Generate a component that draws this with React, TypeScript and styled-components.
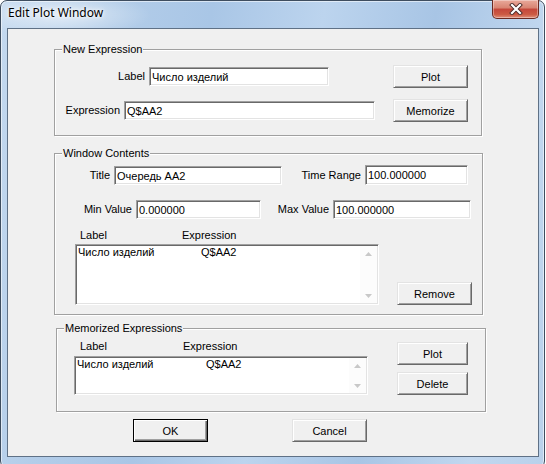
import React from 'react';
import styled, { createGlobalStyle } from 'styled-components';

const GlobalStyle = createGlobalStyle`
  html, body {
    margin: 0;
    padding: 0;
    height: 464px;
    overflow: hidden;
    background: #ffffff;
  }
  body {
    font-family: "Liberation Sans", Arial, sans-serif;
    font-size: 11px;
    color: #000;
  }
`;

const Frame = styled.div`
  width: 545px;
  height: 468px;
  box-sizing: border-box;
  display: flex;
  flex-direction: column;
  border: 1px solid #3e4d5f;
  border-radius: 7px 7px 7px 7px;
  background:
    radial-gradient(ellipse 90px 22px at 60px 14px, rgba(255, 255, 255, 0.55), rgba(255, 255, 255, 0) 100%),
    linear-gradient(100deg, #c4d9ef 0%, #b3cde9 18%, #a9c6e6 34%, #bcd4ee 52%, #a8c5e5 70%, #c1d7ef 88%, #b9d1eb 100%);
  box-shadow: inset 0 0 0 1px rgba(255, 255, 255, 0.55);
`;

const TitleBar = styled.div`
  height: 27px;
  display: flex;
  align-items: center;
  padding-left: 7px;
`;

const TitleText = styled.span`
  font-family: "Segoe UI", "Noto Sans", "Liberation Sans", sans-serif;
  font-size: 12px;
  color: #000;
  margin-top: -4px;
  text-shadow: 0 0 6px #fff, 0 0 3px #fff;
`;

const CloseButton = styled.div`
  margin-left: auto;
  margin-right: 5px;
  align-self: flex-start;
  margin-top: -1px;
  width: 47px;
  height: 19px;
  box-sizing: border-box;
  border: 1px solid #6b2a22;
  border-top: none;
  border-radius: 0 0 5px 5px;
  background: linear-gradient(180deg, #e9a99b 0%, #d88371 45%, #c4463a 50%, #cc5a43 80%, #e0907a 100%);
  box-shadow: inset 0 0 0 1px rgba(255, 255, 255, 0.35);
  display: flex;
  align-items: center;
  justify-content: center;
`;

const Client = styled.div`
  flex: 1;
  margin: 0 5px 10px 6px;
  border: 1px solid #5f7186;
  background: #f0f0f0;
  display: flex;
  flex-direction: column;
`;

const Group = styled.div<{ $left: number; $width: number; $top: number }>`
  position: relative;
  box-sizing: border-box;
  margin-left: ${(p) => p.$left}px;
  margin-top: ${(p) => p.$top}px;
  width: ${(p) => p.$width}px;
  border: 1px solid #a0a0a0;
  box-shadow: inset 1px 1px 0 #fff, 1px 1px 0 #fff;
`;

const GroupCaption = styled.span`
  position: absolute;
  top: -7px;
  left: 7px;
  padding: 0 1px;
  line-height: 13px;
  background: #f0f0f0;
`;

const GroupBody = styled.div<{ $pad: string }>`
  padding: ${(p) => p.$pad};
  display: flex;
  flex-direction: column;
`;

const Row = styled.div<{ $gap?: number; $height?: number }>`
  display: flex;
  align-items: center;
  margin-top: ${(p) => p.$gap ?? 0}px;
  height: ${(p) => p.$height ?? 23}px;
`;

const Caption = styled.span<{ $width: number }>`
  width: ${(p) => p.$width}px;
  margin-right: 4px;
  text-align: right;
  white-space: nowrap;
  line-height: 13px;
`;

const TextBox = styled.div<{ $width: number; $height?: number }>`
  box-sizing: border-box;
  width: ${(p) => p.$width}px;
  height: ${(p) => p.$height ?? 19}px;
  background: #fff;
  border-style: solid;
  border-width: 1px;
  border-color: #a0a0a0 #fff #fff #a0a0a0;
  box-shadow: inset 1px 1px 0 #696969, inset -1px -1px 0 #e3e3e3;
  padding: 2px 0 0 2px;
  line-height: 14px;
  white-space: nowrap;
  overflow: hidden;
`;

const Button = styled.div<{ $width?: number; $default?: boolean; $left?: number }>`
  box-sizing: border-box;
  width: ${(p) => p.$width ?? 75}px;
  height: 23px;
  margin-left: ${(p) => (p.$left === undefined ? 'auto' : `${p.$left}px`)};
  background: #f0f0f0;
  display: flex;
  align-items: center;
  justify-content: center;
  border: 1px solid;
  border-color: ${(p) => (p.$default ? '#000' : '#e3e3e3 #696969 #696969 #e3e3e3')};
  box-shadow: ${(p) =>
    p.$default
      ? 'inset 1px 1px 0 #fff, inset -1px -1px 0 #696969, inset -2px -2px 0 #a0a0a0'
      : 'inset 1px 1px 0 #fff, inset -1px -1px 0 #a0a0a0'};
  flex-shrink: 0;
`;

const ListHeader = styled.div<{ $indent: number; $col: number; $gap?: number }>`
  display: flex;
  padding-left: ${(p) => p.$indent}px;
  margin-top: ${(p) => p.$gap ?? 0}px;
  line-height: 13px;
  & > span:first-child {
    width: ${(p) => p.$col}px;
  }
`;

const ListBox = styled.div<{ $width: number; $height: number; $gap?: number }>`
  box-sizing: border-box;
  width: ${(p) => p.$width}px;
  height: ${(p) => p.$height}px;
  margin-top: ${(p) => p.$gap ?? 0}px;
  background: #fff;
  border-style: solid;
  border-width: 1px;
  border-color: #a0a0a0 #fff #fff #a0a0a0;
  box-shadow: inset 1px 1px 0 #696969, inset -1px -1px 0 #e3e3e3;
  display: flex;
  flex-shrink: 0;
`;

const ListItems = styled.div`
  flex: 1;
  padding: 1px 0 0 2px;
`;

const ListItem = styled.div<{ $col: number }>`
  display: flex;
  line-height: 13px;
  & > span:first-child {
    width: ${(p) => p.$col}px;
  }
`;

const ScrollBar = styled.div`
  width: 17px;
  margin: 1px 1px 1px 0;
  background: #fcfcfc;
  display: flex;
  flex-direction: column;
  justify-content: space-between;
  align-items: center;
  padding: 6px 0 5px;
`;

const ListColumn = styled.div<{ $left: number }>`
  display: flex;
  flex-direction: column;
  margin-left: ${(p) => p.$left}px;
`;

const ButtonColumn = styled.div<{ $left: number; $top: number }>`
  display: flex;
  flex-direction: column;
  gap: 7px;
  margin-left: ${(p) => p.$left}px;
  margin-top: ${(p) => p.$top}px;
`;

const SideButton = styled(Button)`
  align-self: flex-end;
`;

const MemoRow = styled(Row)`
  align-items: flex-start;
`;

const Footer = styled.div`
  display: flex;
  margin-top: 7px;
`;

const Arrow = ({ up }: { up?: boolean }) => (
  <svg width="7" height="4" viewBox="0 0 7 4">
    <path d={up ? 'M0 4 L3.5 0 L7 4 Z' : 'M0 0 L3.5 4 L7 0 Z'} fill="#c8c8c8" />
  </svg>
);

const Scroller = () => (
  <ScrollBar>
    <Arrow up />
    <Arrow />
  </ScrollBar>
);

export default function App() {
  return (
    <>
      <GlobalStyle />
      <Frame>
        <TitleBar>
          <TitleText>Edit Plot Window</TitleText>
          <CloseButton>
            <svg width="14" height="12" viewBox="0 0 14 12">
              <path d="M3 2 L11 10 M11 2 L3 10" stroke="#4a2a28" strokeWidth="4" strokeLinecap="square" />
              <path d="M3 2 L11 10 M11 2 L3 10" stroke="#fff" strokeWidth="2.2" strokeLinecap="square" />
            </svg>
          </CloseButton>
        </TitleBar>
        <Client>
          <Group $left={46} $top={20} $width={428}>
            <GroupCaption>New Expression</GroupCaption>
            <GroupBody $pad="15px 13px 13px 0">
              <Row>
                <Caption $width={90}>Label</Caption>
                <TextBox $width={180}>Число изделий</TextBox>
                <Button>Plot</Button>
              </Row>
              <Row $gap={11}>
                <Caption $width={65}>Expression</Caption>
                <TextBox $width={251}>Q$AA2</TextBox>
                <Button>Memorize</Button>
              </Row>
            </GroupBody>
          </Group>

          <Group $left={46} $top={17} $width={429}>
            <GroupCaption>Window Contents</GroupCaption>
            <GroupBody $pad="11px 9px 9px 0">
              <Row $height={20}>
                <Caption $width={55}>Title</Caption>
                <TextBox $width={168}>Очередь AA2</TextBox>
                <Caption $width={79}>Time Range</Caption>
                <TextBox $width={103} $height={20}>100.000000</TextBox>
              </Row>
              <Row $gap={14} $height={20}>
                <Caption $width={77}>Min Value</Caption>
                <TextBox $width={125}>0.000000</TextBox>
                <Caption $width={68}>Max Value</Caption>
                <TextBox $width={138}>100.000000</TextBox>
              </Row>
              <ListHeader $indent={25} $col={102} $gap={10}>
                <span>Label</span>
                <span>Expression</span>
              </ListHeader>
              <Row $gap={2} $height={61}>
                <ListColumn $left={20}>
                  <ListBox $width={304} $height={61}>
                    <ListItems>
                      <ListItem $col={123}>
                        <span>Число изделий</span>
                        <span>Q$AA2</span>
                      </ListItem>
                    </ListItems>
                    <Scroller />
                  </ListBox>
                </ListColumn>
                <SideButton $left={18}>Remove</SideButton>
              </Row>
            </GroupBody>
          </Group>

          <Group $left={48} $top={13} $width={430}>
            <GroupCaption>Memorized Expressions</GroupCaption>
            <GroupBody $pad="11px 16px 16px 0">
              <MemoRow $height={55}>
                <ListColumn $left={17}>
                  <ListHeader $indent={6} $col={103}>
                    <span>Label</span>
                    <span>Expression</span>
                  </ListHeader>
                  <ListBox $width={294} $height={39} $gap={3}>
                    <ListItems>
                      <ListItem $col={129}>
                        <span>Число изделий</span>
                        <span>Q$AA2</span>
                      </ListItem>
                    </ListItems>
                    <Scroller />
                  </ListBox>
                </ListColumn>
                <ButtonColumn $left={29} $top={2}>
                  <Button $width={71} $left={0}>
                    Plot
                  </Button>
                  <Button $width={71} $left={0}>
                    Delete
                  </Button>
                </ButtonColumn>
              </MemoRow>
            </GroupBody>
          </Group>

          <Footer>
            <Button $default $left={125}>
              OK
            </Button>
            <Button $left={84}>Cancel</Button>
          </Footer>
        </Client>
      </Frame>
    </>
  );
}
